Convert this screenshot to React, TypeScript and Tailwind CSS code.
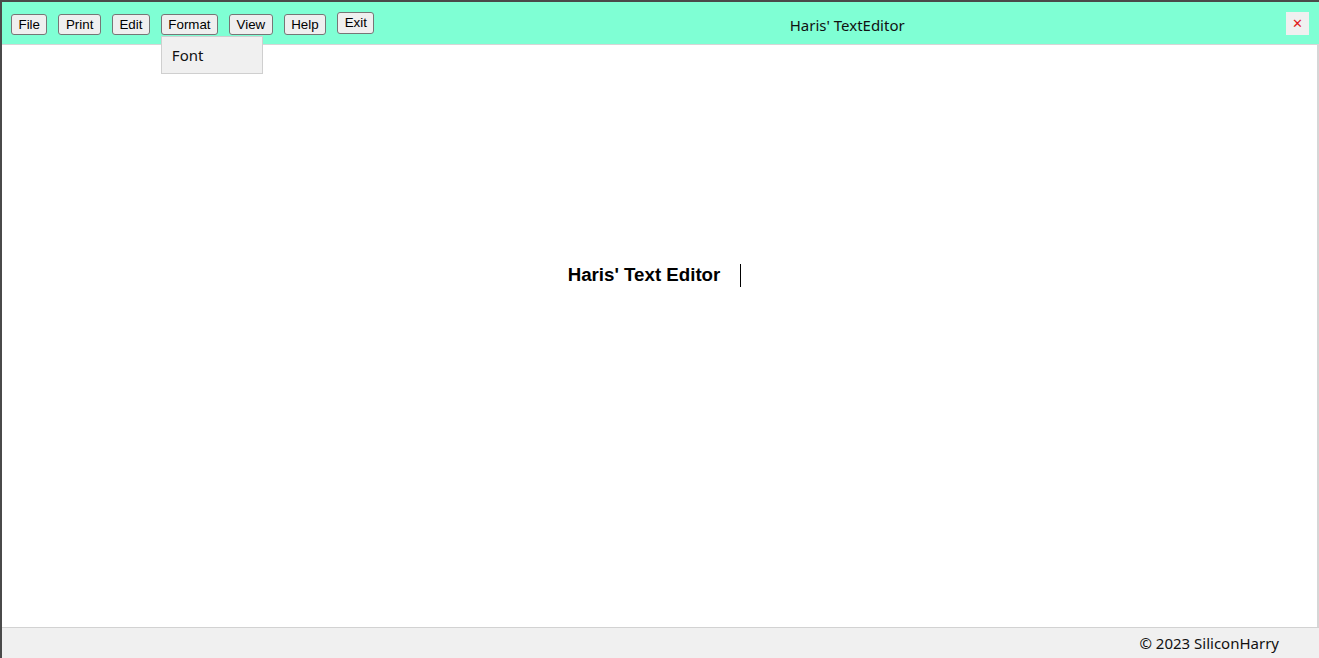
import { useState } from "react";

const menus = ["File", "Print", "Edit", "Format", "View", "Help"];

const App = () => {
  const [open] = useState("Format");

  return (
    <div className="h-[658px] w-[1319px] flex flex-col border-t-2 border-l-2 border-[#4a4a4a] bg-white overflow-hidden">
      <header className="h-[43px] shrink-0 flex items-start bg-[#7fffd4] border-b border-[#d6d6d6]">
        <nav className="flex gap-[11px] pl-[9px] pt-[12px] font-['Liberation_Sans',Arial,sans-serif] text-[13.33px]">
          {menus.map((m) => (
            <div key={m} className="relative">
              <button className="h-[21px] px-[6.5px] leading-[16px] text-black bg-[#efefef] border border-[#767676] rounded-[3px]">
                {m}
              </button>
              {open === m && (
                <div className="absolute left-0 top-[22px] z-10 w-[102px] h-[38px] flex items-center pl-[10px] bg-[#f0f0f0] border border-[#cfcfcf] font-['Noto_Sans',sans-serif] text-[15px] text-[#111]">
                  Font
                </div>
              )}
            </div>
          ))}
          <button className="-mt-[2px] h-[22px] px-[6.5px] leading-[16px] text-black bg-[#efefef] border border-[#767676] rounded-[3px]">
            Exit
          </button>
        </nav>
        <div className="flex-1 pl-[34px] pt-[12px] text-center font-['Noto_Sans',sans-serif] text-[15px] text-[#111]">
          Haris' TextEditor
        </div>
        <button className="mt-[10px] mr-[10px] w-[23px] h-[23px] flex items-center justify-center bg-[#f0f0f0] text-[#e01b1b] text-[13px] font-['Liberation_Sans',Arial,sans-serif]">
          ✕
        </button>
      </header>

      <main className="flex-1 flex items-start justify-center pt-[216px] border-r-2 border-[#d6d6d6] pr-[10px]">
        <div className="flex items-center gap-[20px]">
          <span className="font-['Liberation_Sans',Arial,sans-serif] font-bold text-[18.7px] text-black">
            Haris' Text Editor
          </span>
          <span className="w-px h-[23px] bg-black" />
        </div>
      </main>

      <footer className="h-[31px] shrink-0 flex items-center justify-end pr-[40px] bg-[#f0f0f0] border-t border-[#d2d2d2] font-['Noto_Sans',sans-serif] text-[15px] text-[#111]">
        © 2023 SiliconHarry
      </footer>
    </div>
  );
};

export default App;
